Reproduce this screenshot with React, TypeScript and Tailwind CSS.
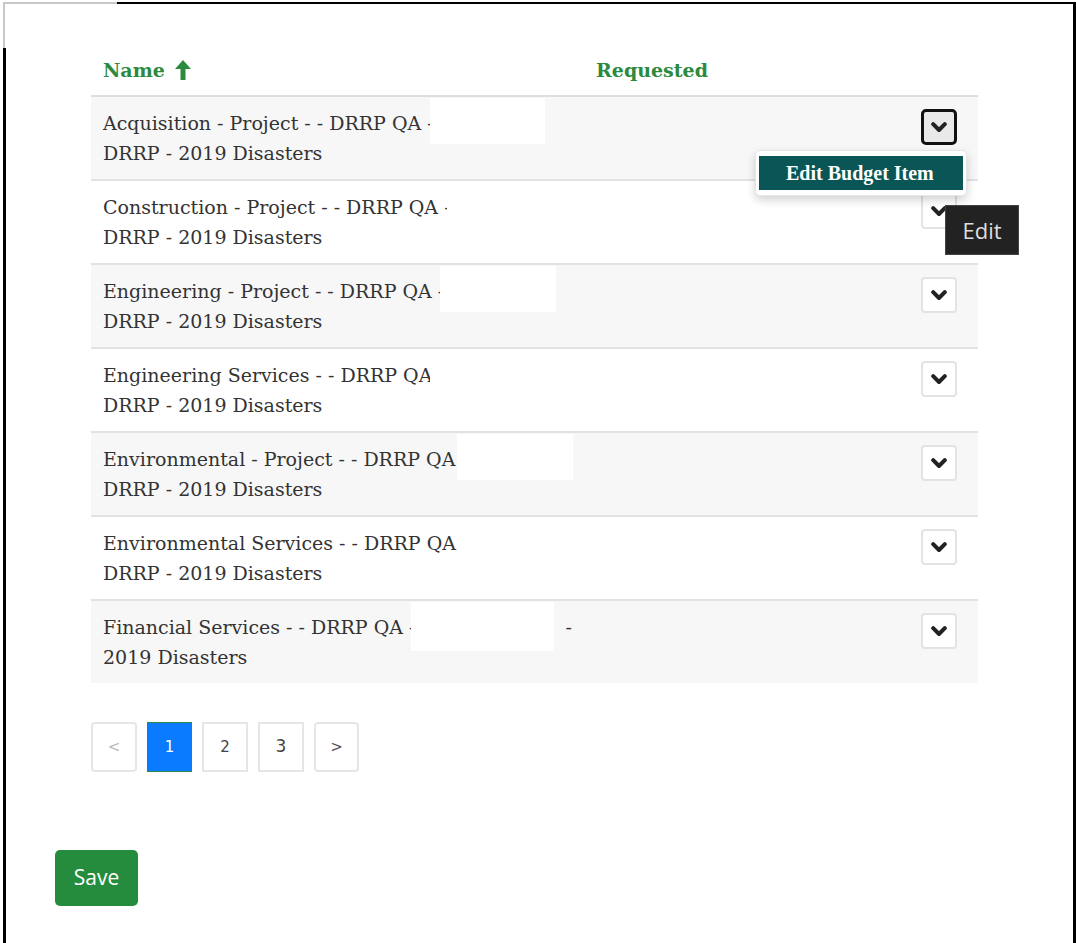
import React from "react";

type Row = {
  first: string;
  second: string;
  mask: { left: number; width: number; height: number };
  tail?: string;
};

const rows: Row[] = [
  { first: "Acquisition - Project - - DRRP QA -", second: "DRRP - 2019 Disasters", mask: { left: 339, width: 115, height: 46 } },
  { first: "Construction - Project - - DRRP QA -", second: "DRRP - 2019 Disasters", mask: { left: 356, width: 113, height: 46 } },
  { first: "Engineering - Project - - DRRP QA -", second: "DRRP - 2019 Disasters", mask: { left: 349, width: 116, height: 46 } },
  { first: "Engineering Services - - DRRP QA", second: "DRRP - 2019 Disasters", mask: { left: 339, width: 115, height: 45 } },
  { first: "Environmental - Project - - DRRP QA", second: "DRRP - 2019 Disasters", mask: { left: 366, width: 116, height: 46 } },
  { first: "Environmental Services - - DRRP QA -", second: "DRRP - 2019 Disasters", mask: { left: 370, width: 114, height: 46 } },
  { first: "Financial Services - - DRRP QA -", second: "2019 Disasters", mask: { left: 320, width: 143, height: 49 }, tail: "-" },
];

const serif = "font-['Georgia','DejaVu_Serif',serif]";

function Chevron() {
  return (
    <svg width="16" height="11" viewBox="0 0 16 11">
      <polyline points="2.2,2.2 8,8 13.8,2.2" fill="none" stroke="#222" strokeWidth="4" strokeLinecap="round" strokeLinejoin="round" />
    </svg>
  );
}

function ChevronButton({ active }: { active?: boolean }) {
  return (
    <button
      className={
        active
          ? "flex h-[36px] w-[36px] items-center justify-center rounded-[5px] border-[3px] border-[#111] bg-[#e9e9e9]"
          : "flex h-[36px] w-[36px] items-center justify-center rounded-[4px] border-2 border-[#e3e3e3] bg-white"
      }
    >
      <Chevron />
    </button>
  );
}

function UpArrow() {
  return (
    <svg width="16" height="20" viewBox="0 0 16 20" className="ml-[10px]">
      <polygon points="8,0 16,9 10.5,9 10.5,20 5.5,20 5.5,9 0,9" fill="#2b8a3e" />
    </svg>
  );
}

export default function App() {
  return (
    <div className="relative h-[943px] w-[1076px] overflow-hidden bg-white">
      <div className="ml-[3px] mt-[2px] h-[941px] w-[1073px] border-l-[3px] border-r-[3px] border-t-[2px] border-black bg-white">
        {/* lighter corner of the frame */}
        <div className="absolute left-[3px] top-[2px] h-[46px] w-[114px] border-l-[2px] border-t-[2px] border-[#c8c8c8] bg-white" />

        <div className={`pl-[49px] pt-[49px] ${serif}`}>
          <div className="ml-[36px] w-[887px]">
            {/* header */}
            <div className="flex h-[44px] items-start border-b-2 border-[#dedede] pt-[2px] text-[19px] font-bold leading-[30px] text-[#2b8a3e]">
              <div className="flex w-[493px] items-center pl-[12px]">
                <span>Name</span>
                <UpArrow />
              </div>
              <div className="pl-[12px]">Requested</div>
            </div>

            {/* body */}
            {rows.map((r, i) => {
              const last = i === rows.length - 1;
              return (
                <div
                  key={i}
                  className={`relative flex ${last ? "h-[82px]" : "h-[84px] border-b-2 border-[#e2e2e2]"} ${
                    i % 2 === 0 ? "bg-[#f7f7f7]" : "bg-white"
                  }`}
                >
                  <div className="w-[493px] pl-[12px] pt-[11px] text-[19px] leading-[30px] text-[#333]">
                    <div className="whitespace-nowrap">
                      {r.first}
                      {r.tail && <span className="ml-[150px]">{r.tail}</span>}
                    </div>
                    <div className="whitespace-nowrap">{r.second}</div>
                  </div>
                  <div
                    className="absolute top-[1px] bg-white"
                    style={{ left: r.mask.left, width: r.mask.width, height: r.mask.height }}
                  />
                  <div className="flex-1" />
                  <div className="pr-[21px] pt-[12px]">
                    <ChevronButton active={i === 0} />
                  </div>
                </div>
              );
            })}

            {/* pagination */}
            <div className="mt-[39px] flex gap-[10px] font-['DejaVu_Sans',sans-serif] text-[15px]">
              <div className="flex h-[50px] w-[46px] items-center justify-center rounded-[4px] border-2 border-[#e6e6e6] text-[#bbb]">
                &lt;
              </div>
              <div className="flex h-[50px] w-[45px] items-center justify-center border border-[#2e8b46] bg-[#0a7bff] text-white">
                1
              </div>
              <div className="flex h-[50px] w-[46px] items-center justify-center border-2 border-[#e6e6e6] text-[#444]">
                2
              </div>
              <div className="flex h-[50px] w-[46px] items-center justify-center border-2 border-[#e6e6e6] text-[17px] text-[#444]">
                3
              </div>
              <div className="flex h-[50px] w-[45px] items-center justify-center rounded-[4px] border-2 border-[#e6e6e6] text-[#555]">
                &gt;
              </div>
            </div>
          </div>

          {/* save */}
          <button className="mt-[78px] flex h-[56px] w-[83px] items-center justify-center rounded-[5px] bg-[#258c3e] font-['Open_Sans',sans-serif] text-[21px] text-white">
            Save
          </button>
        </div>

        {/* row action menu */}
        <div className="absolute left-[755px] top-[150px] w-[212px] rounded-[5px] border border-[#e6e6e6] bg-white px-[3px] py-[5px] shadow-[0_4px_10px_rgba(0,0,0,0.18)] font-['Liberation_Serif',serif]">
          <div className="h-[34px] bg-[#0a5656] pl-[27px] text-[20px] font-bold leading-[34px] text-white">
            Edit Budget Item
          </div>
        </div>

        {/* hover tooltip */}
        <div className="absolute left-[945px] top-[205px] flex h-[50px] w-[74px] items-center justify-center border border-[#444] bg-[#222] font-['Open_Sans',sans-serif] text-[22px] text-[#ddd]">
          Edit
        </div>
      </div>
    </div>
  );
}
